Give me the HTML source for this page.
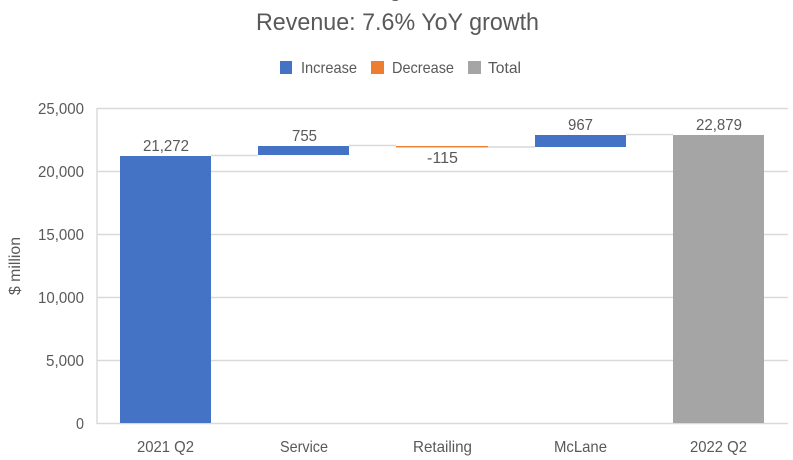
<!DOCTYPE html>
<html lang="en">
<head>
<meta charset="utf-8">
<title>Revenue: 7.6% YoY growth</title>
<style>
html,body{margin:0;padding:0;background:#fff;width:793px;height:460px;overflow:hidden}
svg{display:block}
text{font-family:"Liberation Sans",sans-serif;fill:#595959;font-size:16px}
</style>
</head>
<body>
<svg width="793" height="460" viewBox="0 0 793 460" xmlns="http://www.w3.org/2000/svg">
<rect width="793" height="460" fill="#fff"/>
<text x="389" y="-4" style="font-size:23px">g</text>
<text x="256" y="30" style="font-size:24.5px" textLength="283" lengthAdjust="spacingAndGlyphs">Revenue: 7.6% YoY growth</text>

<rect x="280" y="61" width="12" height="13" fill="#4472c4"/>
<text x="301" y="73" textLength="56" lengthAdjust="spacingAndGlyphs">Increase</text>
<rect x="371" y="61" width="13" height="13" fill="#ed7d31"/>
<text x="392" y="73" textLength="62" lengthAdjust="spacingAndGlyphs">Decrease</text>
<rect x="468" y="61" width="13" height="13" fill="#a5a5a5"/>
<text x="488" y="73" textLength="33" lengthAdjust="spacingAndGlyphs">Total</text>

<g stroke="#d9d9d9" stroke-width="1.4" fill="none">
<path d="M97 108.5H788M97 171.5H788M97 234.5H788M97 297.5H788M97 360.5H788M97 423.5H788M97 108V424"/>
<path d="M211 155.5H258M349 145.5H396M488 147H535M626 134.5H673"/>
</g>

<rect x="120" y="156" width="91" height="267" fill="#4472c4"/>
<rect x="258" y="146" width="91" height="9" fill="#4472c4"/>
<rect x="396" y="146" width="92" height="1.4" fill="#ed7d31"/>
<rect x="535" y="135" width="91" height="12" fill="#4472c4"/>
<rect x="673" y="135" width="91" height="288" fill="#a5a5a5"/>

<text x="38" y="114" textLength="46" lengthAdjust="spacingAndGlyphs">25,000</text>
<text x="38" y="177" textLength="46" lengthAdjust="spacingAndGlyphs">20,000</text>
<text x="38" y="240" textLength="46" lengthAdjust="spacingAndGlyphs">15,000</text>
<text x="38" y="303" textLength="46" lengthAdjust="spacingAndGlyphs">10,000</text>
<text x="46" y="366" textLength="38" lengthAdjust="spacingAndGlyphs">5,000</text>
<text x="76" y="429" textLength="8" lengthAdjust="spacingAndGlyphs">0</text>

<text x="143" y="151" textLength="46" lengthAdjust="spacingAndGlyphs">21,272</text>
<text x="292" y="141" textLength="25" lengthAdjust="spacingAndGlyphs">755</text>
<text x="427" y="163" textLength="31" lengthAdjust="spacingAndGlyphs">-115</text>
<text x="568" y="130" textLength="25" lengthAdjust="spacingAndGlyphs">967</text>
<text x="696" y="130" textLength="46" lengthAdjust="spacingAndGlyphs">22,879</text>

<text x="137" y="452" textLength="57" lengthAdjust="spacingAndGlyphs">2021 Q2</text>
<text x="280" y="452" textLength="48" lengthAdjust="spacingAndGlyphs">Service</text>
<text x="413" y="452" textLength="59" lengthAdjust="spacingAndGlyphs">Retailing</text>
<text x="554" y="452" textLength="53" lengthAdjust="spacingAndGlyphs">McLane</text>
<text x="690" y="452" textLength="57" lengthAdjust="spacingAndGlyphs">2022 Q2</text>

<text transform="translate(20 295) rotate(-90)" textLength="58" lengthAdjust="spacingAndGlyphs">$ million</text>
</svg>
</body>
</html>
